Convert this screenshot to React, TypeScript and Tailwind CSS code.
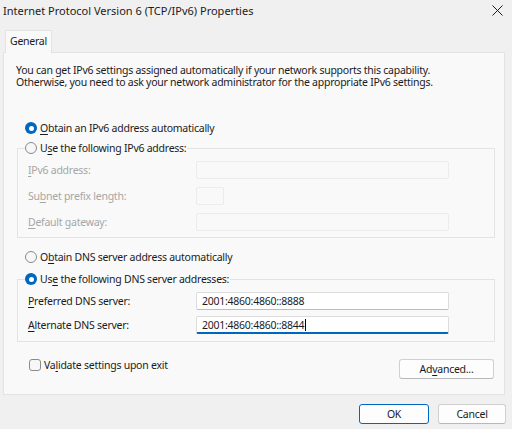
import React from "react";

const font = "font-['Noto_Sans','Open_Sans',sans-serif]";

const Radio = ({ checked }: { checked?: boolean }) =>
  checked ? (
    <span className="flex h-[12px] w-[12px] shrink-0 items-center justify-center rounded-full bg-[#0067c0]">
      <span className="h-[5px] w-[5px] rounded-full bg-white" />
    </span>
  ) : (
    <span className="h-[12px] w-[12px] shrink-0 rounded-full border border-[#8a8a8a] bg-[#f7f7f7]" />
  );

const Field = ({
  label,
  width = "w-[253px]",
  value,
  disabled,
  focused,
}: {
  label: React.ReactNode;
  width?: string;
  value?: string;
  disabled?: boolean;
  focused?: boolean;
}) => (
  <div className="flex h-[18px] items-center pl-[3px]">
    <div className={`w-[168px] ${disabled ? "text-[#a6a6a6]" : "text-[#1b1b1b]"}`}>{label}</div>
    <div
      className={`flex h-full items-center px-[5px] ${width} rounded-[2px] ${
        disabled
          ? "border border-[#ececec] bg-[#f9f9f9]"
          : focused
          ? "border border-[#dcdcdc] border-b-2 border-b-[#0067c0] bg-white"
          : "border border-[#dcdcdc] border-b-[#bdbdbd] bg-white"
      }`}
    >
      {value}
      {focused && <span className="ml-px h-[12px] w-px bg-black" />}
    </div>
  </div>
);

export default function App() {
  return (
    <div className={`h-[429px] w-[512px] overflow-hidden bg-[#f0f0f0] text-[10.5px] leading-[14px] tracking-[-0.25px] text-[#1b1b1b] ${font}`}>
      {/* title bar */}
      <div className="flex h-[21px] items-center justify-between pl-[3px] pr-[9px]">
        <span className="text-[11px] tracking-normal">Internet Protocol Version 6 (TCP/IPv6) Properties</span>
        <svg width="11" height="11" viewBox="0 0 11 11" className="mt-[-1px]">
          <path d="M0.5 0.5 L10.5 10.5 M10.5 0.5 L0.5 10.5" stroke="#1b1b1b" strokeWidth="1" />
        </svg>
      </div>

      {/* tab */}
      <div className="relative z-10 mt-[9px] ml-[5px] -mb-px flex h-[23px] w-[47px] items-center border border-b-0 border-[#e3e3e3] bg-[#f9f9f9] pl-[4px] pb-[2px]">
        General
      </div>

      {/* tab panel */}
      <div className="mx-[3px] flex h-[343px] w-[502px] flex-col border border-[#e3e3e3] bg-[#f9f9f9] pl-[12px] pr-[10px]">
        <div className="mt-[11px] flex flex-col leading-[12px]">
          <span>You can get IPv6 settings assigned automatically if your network supports this capability.</span>
          <span>Otherwise, you need to ask your network administrator for the appropriate IPv6 settings.</span>
        </div>

        <div className="mt-[32px] ml-[9px] flex h-[16px] items-center gap-[3px]">
          <Radio checked />
          <span>
            <u className="underline-offset-2">O</u>btain an IPv6 address automatically
          </span>
        </div>

        <fieldset className="mt-[4px] ml-[1px] w-[478px] border border-[#e3e3e3] px-[7px] pb-[6px]">
          <legend className="flex h-[16px] items-center gap-[3px] bg-[#f9f9f9] pr-[1px]">
            <Radio />
            <span>
              U<u className="underline-offset-2">s</u>e the following IPv6 address:
            </span>
          </legend>
          <div className="mt-[5px] flex flex-col gap-[8px]">
            <Field disabled label={<><u className="underline-offset-2">I</u>Pv6 address:</>} />
            <Field disabled width="w-[28px]" label={<>Su<u className="underline-offset-2">b</u>net prefix length:</>} />
            <Field disabled label={<><u className="underline-offset-2">D</u>efault gateway:</>} />
          </div>
        </fieldset>

        <div className="mt-[11px] ml-[9px] flex h-[16px] items-center gap-[3px]">
          <Radio />
          <span>
            O<u className="underline-offset-2">b</u>tain DNS server address automatically
          </span>
        </div>

        <fieldset className="mt-[6px] ml-[1px] w-[478px] border border-[#e3e3e3] px-[7px] pb-[7px]">
          <legend className="flex h-[16px] items-center gap-[3px] bg-[#f9f9f9] pr-[1px]">
            <Radio checked />
            <span>
              Us<u className="underline-offset-2">e</u> the following DNS server addresses:
            </span>
          </legend>
          <div className="mt-[5px] flex flex-col gap-[6px]">
            <Field value="2001:4860:4860::8888" label={<><u className="underline-offset-2">P</u>referred DNS server:</>} />
            <Field focused value="2001:4860:4860::8844" label={<><u className="underline-offset-2">A</u>lternate DNS server:</>} />
          </div>
        </fieldset>

        <div className="flex items-start justify-between">
          <div className="mt-[16px] ml-[13px] flex items-center gap-[3px]">
            <span className="h-[12px] w-[12px] rounded-[3px] border border-[#8a8a8a] bg-[#f7f7f7]" />
            <span>
              Va<u className="underline-offset-2">l</u>idate settings upon exit
            </span>
          </div>
          <button className="mt-[17px] flex h-[20px] w-[95px] items-center justify-center rounded-[3px] border border-[#d0d0d0] border-b-[#b8b8b8] bg-[#fdfdfd]">
            Ad<u className="underline-offset-2">v</u>anced...
          </button>
        </div>
      </div>

      {/* dialog buttons */}
      <div className="mt-[9px] flex justify-end gap-[9px] pr-[6px]">
        <button className="flex h-[20px] w-[70px] items-center justify-center rounded-[3px] border border-[#0067c0] bg-[#fdfdfd]">
          OK
        </button>
        <button className="flex h-[20px] w-[68px] items-center justify-center rounded-[3px] border border-[#d0d0d0] border-b-[#b8b8b8] bg-[#fdfdfd]">
          Cancel
        </button>
      </div>
    </div>
  );
}
